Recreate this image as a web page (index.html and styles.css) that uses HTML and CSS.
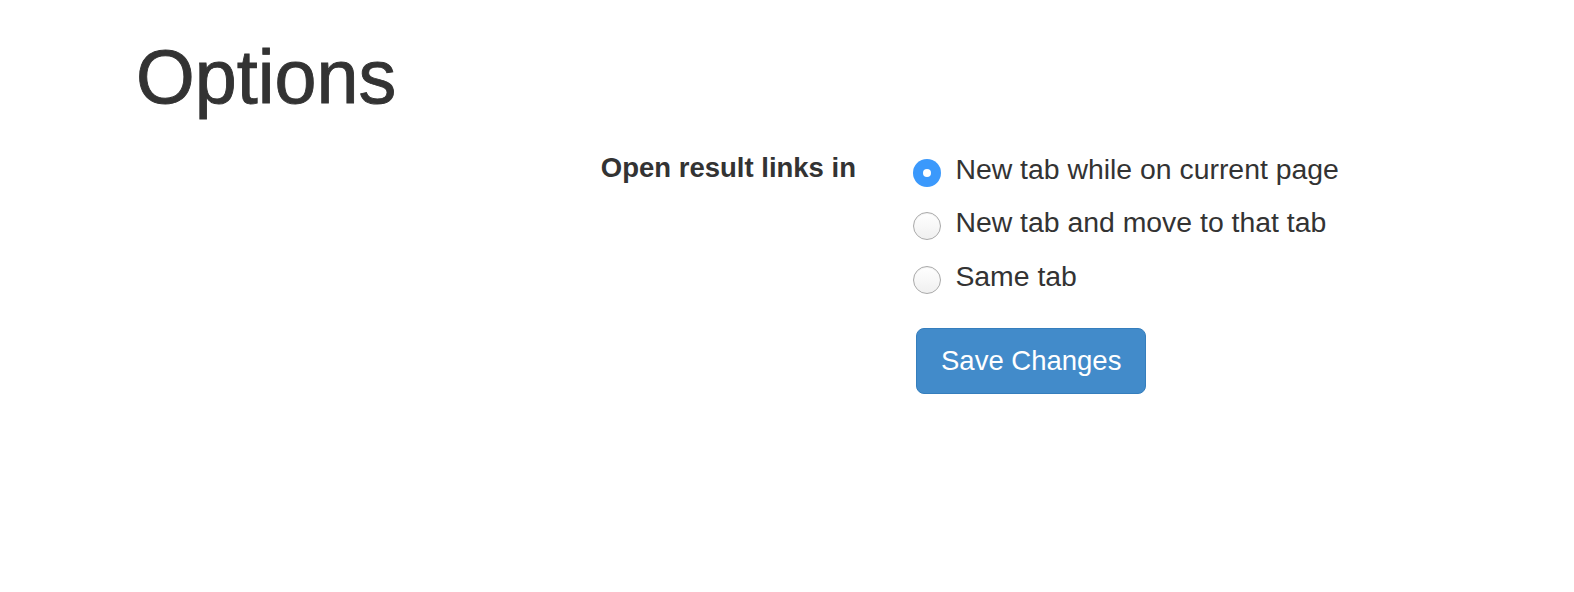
FILE: index.html
```html
<!DOCTYPE html>
<html lang="en">
<head>
<meta charset="utf-8">
<title>Options</title>
<link rel="stylesheet" href="styles.css">
</head>
<body>
<div class="container">
  <h1 class="title">Options</h1>
  <form class="form">
    <div class="form-row">
      <div class="label">Open result links in</div>
      <div class="controls">
        <label class="radio"><span class="dot checked"></span><span class="radio-text">New tab while on current page</span></label>
        <label class="radio"><span class="dot"></span><span class="radio-text">New tab and move to that tab</span></label>
        <label class="radio"><span class="dot"></span><span class="radio-text">Same tab</span></label>
        <div class="actions"><button type="button" class="btn">Save Changes</button></div>
      </div>
    </div>
  </form>
</div>
</body>
</html>
```
FILE: styles.css
```css
html, body {
  margin: 0;
  padding: 0;
  background: #fff;
}
body {
  font-family: "Liberation Sans", Arial, Helvetica, sans-serif;
  color: #333;
}
.container {
  padding-left: 136px;
}
.title {
  margin: 36.3px 0 0 0;
  font-size: 75.5px;
  line-height: 82.5px;
  font-weight: normal;
  color: #333;
  -webkit-text-stroke: 0.9px #333;
}
.form {
  margin: 22.4px 0 0 0;
}
.form-row {
  display: flex;
  align-items: baseline;
}
.label {
  width: 720px;
  text-align: right;
  font-weight: bold;
  font-size: 27.5px;
  line-height: 53.5px;
  flex-shrink: 0;
}
.controls {
  margin-left: 57px;
  display: flex;
  flex-direction: column;
}
.radio {
  display: flex;
  height: 53.3px;
  line-height: 53.3px;
  font-size: 28.4px;
}
.dot {
  box-sizing: border-box;
  width: 28px;
  height: 28px;
  margin-top: 16px;
  border-radius: 50%;
  border: 1px solid #aaaaaa;
  background: linear-gradient(#ffffff, #f0f0f0);
  box-shadow: inset 0 1px 1px rgba(0,0,0,0.06);
  flex-shrink: 0;
  display: flex;
  align-items: center;
  justify-content: center;
}
.dot.checked {
  border: none;
  background: #3b99fc;
  box-shadow: none;
}
.dot.checked::after {
  content: "";
  width: 8px;
  height: 8px;
  border-radius: 50%;
  background: #fff;
}
.radio-text {
  margin-left: 14.4px;
}
.actions {
  margin-top: 25px;
  padding-left: 3px;
}
.btn {
  font-family: "Liberation Sans", Arial, Helvetica, sans-serif;
  font-size: 27.5px;
  line-height: 40px;
  padding: 12px 24px;
  color: #fff;
  background: #428bca;
  border: 1px solid #357ebd;
  border-radius: 8px;
  cursor: pointer;
}
```
